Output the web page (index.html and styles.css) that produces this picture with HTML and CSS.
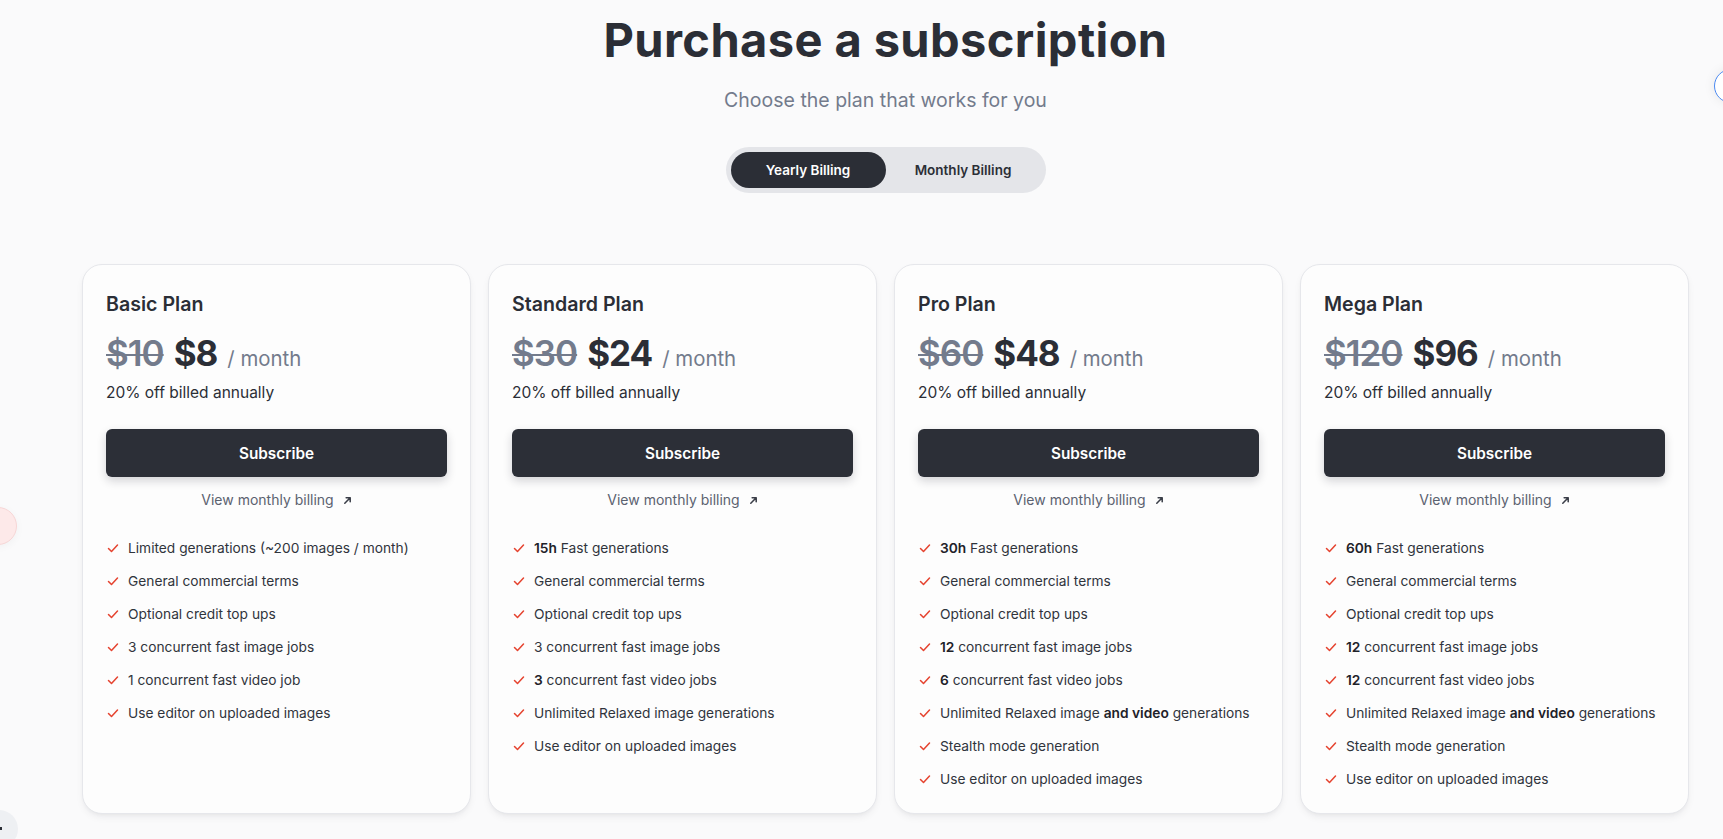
FILE: index.html
```html
<!DOCTYPE html>
<html lang="en">
<head>
<meta charset="utf-8">
<title>Purchase a subscription</title>
<link rel="stylesheet" href="styles.css">
</head>
<body>
<div class="app">
  <aside class="rail"></aside>
  <main class="main">
    <header class="hero">
      <h1 class="hero-title">Purchase a subscription</h1>
      <p class="hero-sub">Choose the plan that works for you</p>
      <div class="toggle">
        <button class="toggle-btn is-active">Yearly Billing</button>
        <button class="toggle-btn">Monthly Billing</button>
      </div>
    </header>

    <section class="plans">
      <article class="card">
        <h2 class="card-title">Basic Plan</h2>
        <div class="price"><s class="price-old">$10</s><span class="price-new">$8</span><span class="price-per">/ month</span></div>
        <p class="price-note">20% off billed annually</p>
        <button class="subscribe">Subscribe</button>
        <a class="view-link">View monthly billing <svg class="arrow" viewBox="0 0 10 10" width="9" height="9"><path d="M2 8L8 2M3.5 2H8V6.5" fill="none" stroke="currentColor" stroke-width="1.7" stroke-linecap="round" stroke-linejoin="round"/></svg></a>
        <ul class="features">
          <li><svg class="check" viewBox="0 0 12 12"><path d="M1.5 6.5l3 3L10.5 3" /></svg><span>Limited generations (~200 images / month)</span></li>
          <li><svg class="check" viewBox="0 0 12 12"><path d="M1.5 6.5l3 3L10.5 3" /></svg><span>General commercial terms</span></li>
          <li><svg class="check" viewBox="0 0 12 12"><path d="M1.5 6.5l3 3L10.5 3" /></svg><span>Optional credit top ups</span></li>
          <li><svg class="check" viewBox="0 0 12 12"><path d="M1.5 6.5l3 3L10.5 3" /></svg><span>3 concurrent fast image jobs</span></li>
          <li><svg class="check" viewBox="0 0 12 12"><path d="M1.5 6.5l3 3L10.5 3" /></svg><span>1 concurrent fast video job</span></li>
          <li><svg class="check" viewBox="0 0 12 12"><path d="M1.5 6.5l3 3L10.5 3" /></svg><span>Use editor on uploaded images</span></li>
        </ul>
      </article>

      <article class="card">
        <h2 class="card-title">Standard Plan</h2>
        <div class="price"><s class="price-old">$30</s><span class="price-new">$24</span><span class="price-per">/ month</span></div>
        <p class="price-note">20% off billed annually</p>
        <button class="subscribe">Subscribe</button>
        <a class="view-link">View monthly billing <svg class="arrow" viewBox="0 0 10 10" width="9" height="9"><path d="M2 8L8 2M3.5 2H8V6.5" fill="none" stroke="currentColor" stroke-width="1.7" stroke-linecap="round" stroke-linejoin="round"/></svg></a>
        <ul class="features">
          <li><svg class="check" viewBox="0 0 12 12"><path d="M1.5 6.5l3 3L10.5 3" /></svg><span><b>15h</b> Fast generations</span></li>
          <li><svg class="check" viewBox="0 0 12 12"><path d="M1.5 6.5l3 3L10.5 3" /></svg><span>General commercial terms</span></li>
          <li><svg class="check" viewBox="0 0 12 12"><path d="M1.5 6.5l3 3L10.5 3" /></svg><span>Optional credit top ups</span></li>
          <li><svg class="check" viewBox="0 0 12 12"><path d="M1.5 6.5l3 3L10.5 3" /></svg><span>3 concurrent fast image jobs</span></li>
          <li><svg class="check" viewBox="0 0 12 12"><path d="M1.5 6.5l3 3L10.5 3" /></svg><span><b>3</b> concurrent fast video jobs</span></li>
          <li><svg class="check" viewBox="0 0 12 12"><path d="M1.5 6.5l3 3L10.5 3" /></svg><span>Unlimited Relaxed image generations</span></li>
          <li><svg class="check" viewBox="0 0 12 12"><path d="M1.5 6.5l3 3L10.5 3" /></svg><span>Use editor on uploaded images</span></li>
        </ul>
      </article>

      <article class="card">
        <h2 class="card-title">Pro Plan</h2>
        <div class="price"><s class="price-old">$60</s><span class="price-new">$48</span><span class="price-per">/ month</span></div>
        <p class="price-note">20% off billed annually</p>
        <button class="subscribe">Subscribe</button>
        <a class="view-link">View monthly billing <svg class="arrow" viewBox="0 0 10 10" width="9" height="9"><path d="M2 8L8 2M3.5 2H8V6.5" fill="none" stroke="currentColor" stroke-width="1.7" stroke-linecap="round" stroke-linejoin="round"/></svg></a>
        <ul class="features">
          <li><svg class="check" viewBox="0 0 12 12"><path d="M1.5 6.5l3 3L10.5 3" /></svg><span><b>30h</b> Fast generations</span></li>
          <li><svg class="check" viewBox="0 0 12 12"><path d="M1.5 6.5l3 3L10.5 3" /></svg><span>General commercial terms</span></li>
          <li><svg class="check" viewBox="0 0 12 12"><path d="M1.5 6.5l3 3L10.5 3" /></svg><span>Optional credit top ups</span></li>
          <li><svg class="check" viewBox="0 0 12 12"><path d="M1.5 6.5l3 3L10.5 3" /></svg><span><b>12</b> concurrent fast image jobs</span></li>
          <li><svg class="check" viewBox="0 0 12 12"><path d="M1.5 6.5l3 3L10.5 3" /></svg><span><b>6</b> concurrent fast video jobs</span></li>
          <li><svg class="check" viewBox="0 0 12 12"><path d="M1.5 6.5l3 3L10.5 3" /></svg><span>Unlimited Relaxed image <b>and video</b> generations</span></li>
          <li><svg class="check" viewBox="0 0 12 12"><path d="M1.5 6.5l3 3L10.5 3" /></svg><span>Stealth mode generation</span></li>
          <li><svg class="check" viewBox="0 0 12 12"><path d="M1.5 6.5l3 3L10.5 3" /></svg><span>Use editor on uploaded images</span></li>
        </ul>
      </article>

      <article class="card">
        <h2 class="card-title">Mega Plan</h2>
        <div class="price"><s class="price-old">$120</s><span class="price-new">$96</span><span class="price-per">/ month</span></div>
        <p class="price-note">20% off billed annually</p>
        <button class="subscribe">Subscribe</button>
        <a class="view-link">View monthly billing <svg class="arrow" viewBox="0 0 10 10" width="9" height="9"><path d="M2 8L8 2M3.5 2H8V6.5" fill="none" stroke="currentColor" stroke-width="1.7" stroke-linecap="round" stroke-linejoin="round"/></svg></a>
        <ul class="features">
          <li><svg class="check" viewBox="0 0 12 12"><path d="M1.5 6.5l3 3L10.5 3" /></svg><span><b>60h</b> Fast generations</span></li>
          <li><svg class="check" viewBox="0 0 12 12"><path d="M1.5 6.5l3 3L10.5 3" /></svg><span>General commercial terms</span></li>
          <li><svg class="check" viewBox="0 0 12 12"><path d="M1.5 6.5l3 3L10.5 3" /></svg><span>Optional credit top ups</span></li>
          <li><svg class="check" viewBox="0 0 12 12"><path d="M1.5 6.5l3 3L10.5 3" /></svg><span><b>12</b> concurrent fast image jobs</span></li>
          <li><svg class="check" viewBox="0 0 12 12"><path d="M1.5 6.5l3 3L10.5 3" /></svg><span><b>12</b> concurrent fast video jobs</span></li>
          <li><svg class="check" viewBox="0 0 12 12"><path d="M1.5 6.5l3 3L10.5 3" /></svg><span>Unlimited Relaxed image <b>and video</b> generations</span></li>
          <li><svg class="check" viewBox="0 0 12 12"><path d="M1.5 6.5l3 3L10.5 3" /></svg><span>Stealth mode generation</span></li>
          <li><svg class="check" viewBox="0 0 12 12"><path d="M1.5 6.5l3 3L10.5 3" /></svg><span>Use editor on uploaded images</span></li>
        </ul>
      </article>
    </section>
  </main>
</div>

<div class="float-pink"></div>
<div class="float-gray"><span class="float-dot"></span></div>
<div class="float-ring"></div>
</body>
</html>
```

FILE: styles.css
```css
* { box-sizing: border-box; }

html, body {
  margin: 0;
  padding: 0;
  height: 100%;
}

body {
  background: #fafafb;
  color: #2b2e36;
  font-family: Inter, "Noto Sans", "Liberation Sans", sans-serif;
  overflow: hidden;
}

.app {
  display: flex;
  min-height: 839px;
}

.rail {
  flex: 0 0 48px;
}

.main {
  flex: 1;
  display: flex;
  flex-direction: column;
  padding: 0 34px;
}

.hero {
  display: flex;
  flex-direction: column;
  align-items: center;
  padding-top: 12px;
}

.hero-title {
  margin: 0;
  font-size: 47px;
  line-height: 56px;
  font-weight: 700;
  letter-spacing: 0.4px;
  color: #2b2e36;
}

.hero-sub {
  margin: 19px 0 0;
  font-size: 19.5px;
  line-height: 26px;
  color: #737b8c;
  font-weight: 400;
}

.toggle {
  margin-top: 34px;
  display: flex;
  padding: 5px;
  background: #e4e5e9;
  border-radius: 999px;
}

.toggle-btn {
  border: 0;
  background: transparent;
  font-family: inherit;
  font-size: 13.5px;
  font-weight: 600;
  color: #2b2e36;
  width: 155px;
  height: 36px;
  border-radius: 999px;
  cursor: pointer;
  padding: 0;
}

.toggle-btn.is-active {
  background: #2b2e36;
  color: #ffffff;
}

.plans {
  margin-top: 71px;
  display: grid;
  grid-template-columns: repeat(4, 1fr);
  gap: 17px;
}

.card {
  background: #fdfdfd;
  border: 1px solid #e6e7eb;
  border-radius: 20px;
  padding: 23px 23px 18px;
  box-shadow: 0 4px 8px -2px rgba(20, 24, 40, 0.08), 0 2px 4px -2px rgba(20, 24, 40, 0.05);
  height: 550px;
  display: flex;
  flex-direction: column;
}

.card > * {
  flex-shrink: 0;
}

.card-title {
  margin: 0;
  font-size: 19.6px;
  line-height: 28px;
  font-weight: 600;
  color: #2b2e36;
  padding-top: 2px;
}

.price {
  display: flex;
  align-items: baseline;
  margin-top: 13px;
  height: 44px;
  line-height: 44px;
}

.price-old {
  font-size: 35px;
  font-weight: 600;
  color: #737b8c;
  letter-spacing: -1px;
  text-decoration-thickness: 2px;
}

.price-new {
  font-size: 35px;
  font-weight: 700;
  color: #2b2e36;
  margin-left: 10px;
  letter-spacing: -1px;
}

.price-per {
  font-size: 20.4px;
  line-height: 22px;
  color: #737b8c;
  margin-left: 10px;
}

.price-note {
  margin: 7px 0 0;
  font-size: 15.5px;
  line-height: 22px;
  color: #2b2e36;
}

.subscribe {
  margin-top: 25px;
  height: 48px;
  width: 100%;
  border: 0;
  border-radius: 6px;
  background: #2c2f37;
  color: #ffffff;
  font-family: inherit;
  font-size: 15.3px;
  font-weight: 600;
  box-shadow: 0 4px 10px rgba(20, 24, 40, 0.18);
  cursor: pointer;
}

.view-link {
  margin-top: 14px;
  display: flex;
  align-items: center;
  justify-content: center;
  gap: 9px;
  font-size: 14px;
  line-height: 18px;
  color: #5b6270;
  text-decoration: none;
}

.arrow {
  color: #3a3e48;
  margin-top: 1px;
}

.features {
  list-style: none;
  margin: 22px 0 0;
  padding: 0;
  display: flex;
  flex-direction: column;
}

.features li {
  display: flex;
  align-items: center;
  gap: 9px;
  height: 33px;
  font-size: 13.75px;
  color: #30343c;
}

.features b {
  font-weight: 600;
  color: #1f2229;
}

.check {
  width: 12px;
  height: 12px;
  flex: 0 0 12px;
  margin-left: 1px;
}

.check path {
  fill: none;
  stroke: #e5432f;
  stroke-width: 1.5;
  stroke-linecap: round;
  stroke-linejoin: round;
}

.float-pink {
  position: absolute;
  left: -21px;
  top: 507px;
  width: 38px;
  height: 38px;
  border-radius: 50%;
  background: #fde9e9;
  border: 1px solid #f7d6d6;
  box-shadow: 0 2px 8px rgba(0, 0, 0, 0.04);
}

.float-gray {
  position: absolute;
  left: -20px;
  top: 810px;
  width: 38px;
  height: 38px;
  border-radius: 50%;
  background: #eef0f3;
}

.float-dot {
  position: absolute;
  left: 19px;
  top: 17px;
  width: 3px;
  height: 3px;
  background: #2b2e36;
}

.float-ring {
  position: absolute;
  left: 1714px;
  top: 69px;
  width: 34px;
  height: 34px;
  border-radius: 50%;
  background: #ffffff;
  border: 1.5px solid #4c8af2;
  box-shadow: 0 0 12px rgba(0, 0, 0, 0.08);
}
```
